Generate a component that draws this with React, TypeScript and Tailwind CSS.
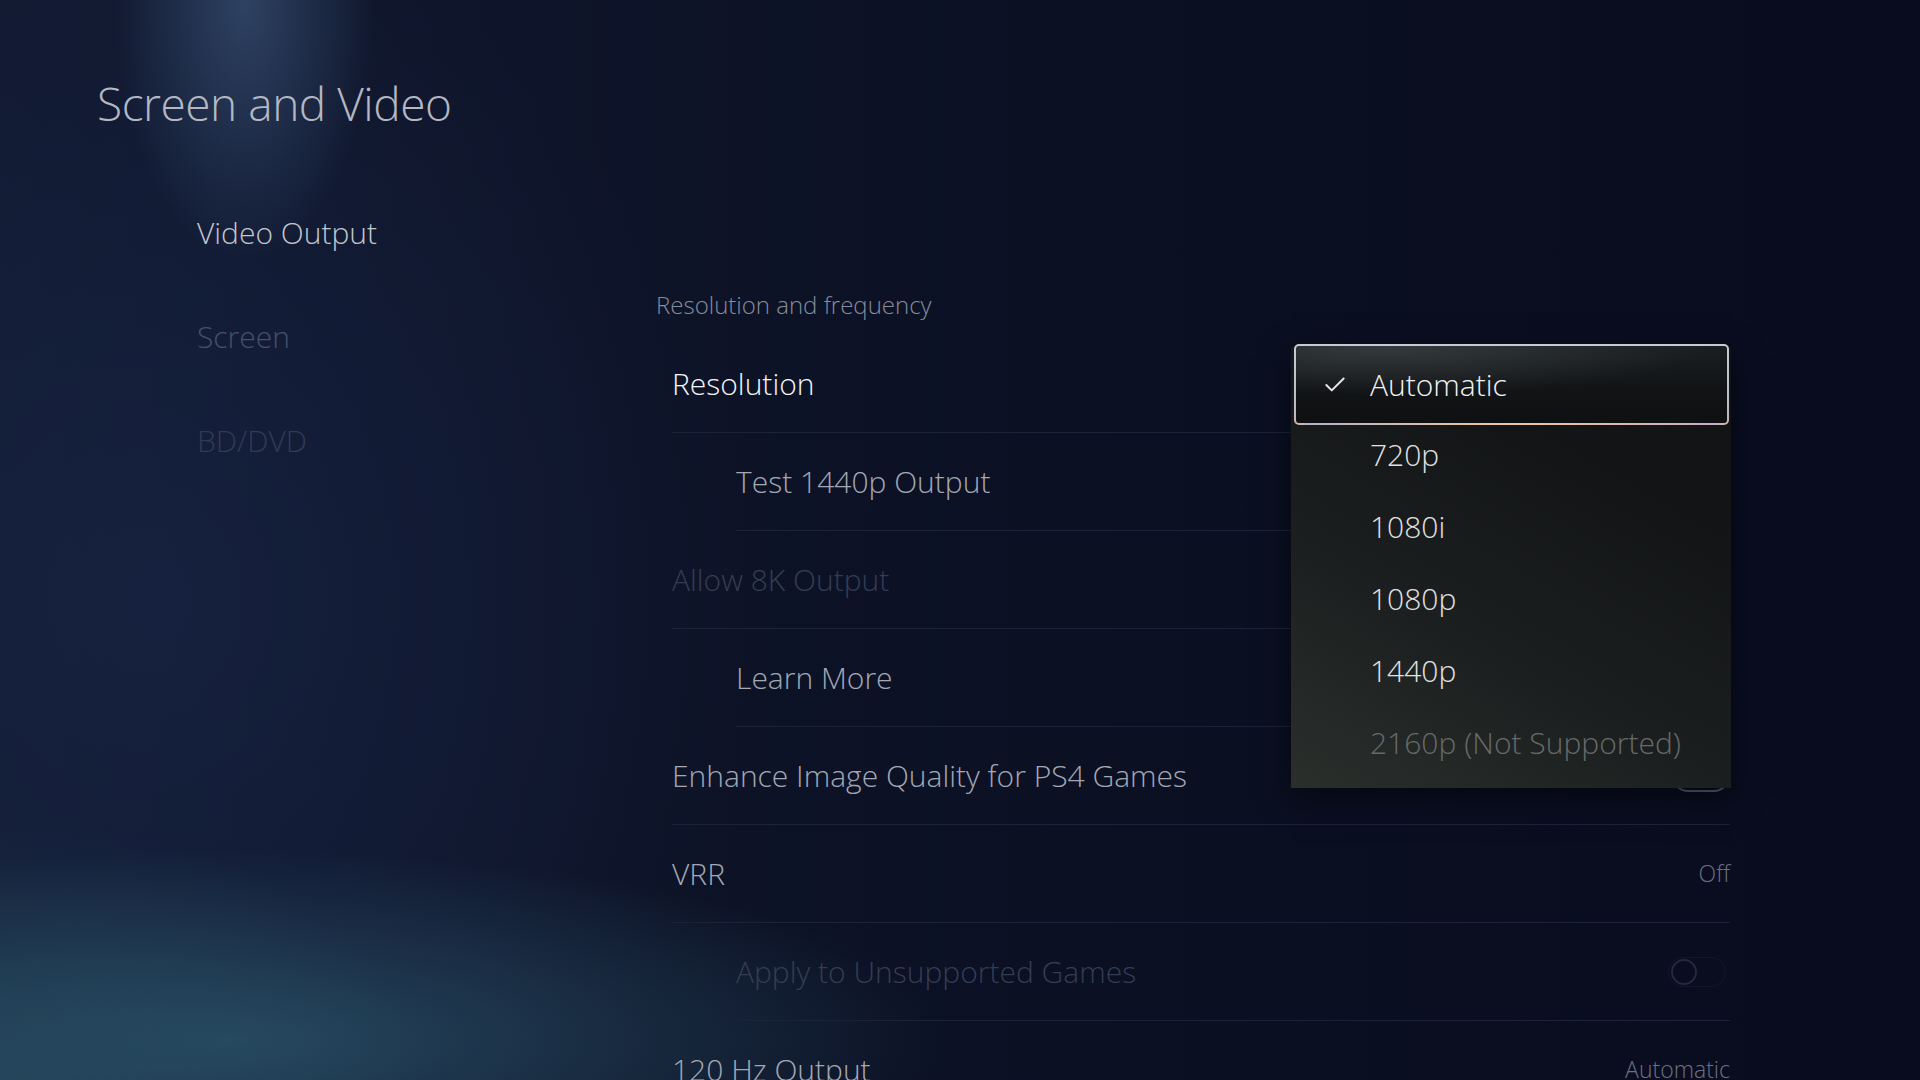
import { Check } from 'lucide-react';

type Row = {
  label: string;
  tone: 'focus' | 'normal' | 'disabled';
  indent?: boolean;
  value?: string;
  toggle?: 'on' | 'off' | 'faint';
};

const rows: Row[] = [
  { label: 'Resolution', tone: 'focus' },
  { label: 'Test 1440p Output', tone: 'normal', indent: true },
  { label: 'Allow 8K Output', tone: 'disabled', toggle: 'off' },
  { label: 'Learn More', tone: 'normal', indent: true },
  { label: 'Enhance Image Quality for PS4 Games', tone: 'normal', toggle: 'off' },
  { label: 'VRR', tone: 'normal', value: 'Off' },
  { label: 'Apply to Unsupported Games', tone: 'disabled', indent: true, toggle: 'faint' },
  { label: '120 Hz Output', tone: 'normal', value: 'Automatic' },
];

const options = ['720p', '1080i', '1080p', '1440p'];

export default function App() {
  return (
    <div className="relative h-screen w-full overflow-hidden font-['Open_Sans','Noto_Sans',sans-serif] font-light bg-[radial-gradient(ellipse_130px_260px_at_245px_0px,rgba(70,100,140,0.55),transparent),radial-gradient(ellipse_720px_190px_at_230px_1040px,rgba(42,82,104,0.8),transparent),radial-gradient(ellipse_420px_260px_at_0px_1080px,rgba(34,66,86,0.7),transparent),radial-gradient(ellipse_600px_700px_at_150px_600px,rgba(25,40,75,0.55),transparent),linear-gradient(90deg,#121a31_0%,#0e1429_30%,#0b1023_55%,#090c1e_100%)]">
      <div className="flex h-full">
        {/* Left column: page title + sections */}
        <div className="w-[656px] shrink-0 pl-[97px] pt-[80px]">
          <h1 className="text-[46px] leading-none text-[#b3b8c3] tracking-[-0.01em]">Screen and Video</h1>
          <nav className="mt-[55px] pl-[100px]">
            <NavItem label="Video Output" className="text-[#c2c6cf]" />
            <NavItem label="Screen" className="text-[#465066]" />
            <NavItem label="BD/DVD" className="text-[#323a52]" />
          </nav>
        </div>

        {/* Right column: settings list */}
        <div className="w-[1074px] shrink-0 pt-[293px]">
          <div className="h-[24px] flex items-center text-[24px] leading-none text-[#868c9a]">Resolution and frequency</div>
          <div className="mt-[18px] ml-[16px]">
            {rows.map(r => (
              <SettingRow key={r.label} row={r} />
            ))}
          </div>
        </div>
      </div>

      {/* Dropdown menu */}
      <div className="absolute left-[1291px] top-[347px] w-[440px] pb-[9px] bg-[linear-gradient(30deg,#2a2f2c_0%,#1c1f1f_35%,#131516_70%,#101213_100%)] shadow-[0_10px_30px_rgba(0,0,0,0.5)]">
        <div className="relative h-[72px]">
          <div className="absolute left-[3px] right-[2px] top-[-3px] bottom-[-6px] rounded-[5px] p-[2px] bg-[linear-gradient(180deg,#c6cad4_0%,#b8bcc7_80%,#cdb3ad_100%)]">
            <div className="relative flex h-full items-center rounded-[3px] bg-[radial-gradient(ellipse_320px_50px_at_90px_0px,rgba(70,76,80,0.6),transparent),linear-gradient(180deg,#1b1f21_0%,#111315_60%,#0e1011_100%)]">
              <Check className="ml-[26px] h-[26px] w-[26px] text-[#e6e7ea]" strokeWidth={1.8} />
              <span className="ml-[22px] text-[30px] leading-none text-[#f3f3f4]">Automatic</span>
            </div>
            <div className="absolute bottom-0 left-[10px] right-[10px] h-[2px] bg-[linear-gradient(90deg,#b7b0c9,#f0c79e_50%,#c8aac4)]" />
          </div>
        </div>
        {options.map(o => (
          <div key={o} className="h-[72px] flex items-center pl-[79px] text-[30px] leading-none text-[#e2e3e4]">{o}</div>
        ))}
        <div className="h-[72px] flex items-center pl-[79px] text-[30px] leading-none text-[#666a6b]">2160p (Not Supported)</div>
      </div>
    </div>
  );
}

function NavItem({ label, className }: { label: string; className: string }) {
  return <div className={`h-[104px] flex items-center text-[30px] leading-none ${className}`}>{label}</div>;
}

function SettingRow({ row }: { row: Row }) {
  const color =
    row.tone === 'focus' ? 'text-[#f4f5f7]' : row.tone === 'disabled' ? 'text-[#353d52]' : 'text-[#a3a8b4]';
  return (
    <div className={`h-[98px] flex items-center justify-between border-b border-[#1c2338] ${row.indent ? 'ml-[64px]' : ''}`}>
      <span className={`text-[30px] leading-none ${color}`}>{row.label}</span>
      {row.value && <span className="text-[23px] leading-none text-[#6b7182]">{row.value}</span>}
      {row.toggle === 'off' && (
        <div className="w-[58px] h-[32px] rounded-full border-2 border-[#565c6c] flex items-center px-[2px]">
          <div className="w-[24px] h-[24px] rounded-full bg-[#565c6c]" />
        </div>
      )}
      {row.toggle === 'faint' && (
        <div className="mr-[4px] w-[58px] h-[30px] rounded-full border border-[#111729] flex items-center px-[2px]">
          <div className="w-[26px] h-[26px] rounded-full border-2 border-[#222a3d]" />
        </div>
      )}
    </div>
  );
}
